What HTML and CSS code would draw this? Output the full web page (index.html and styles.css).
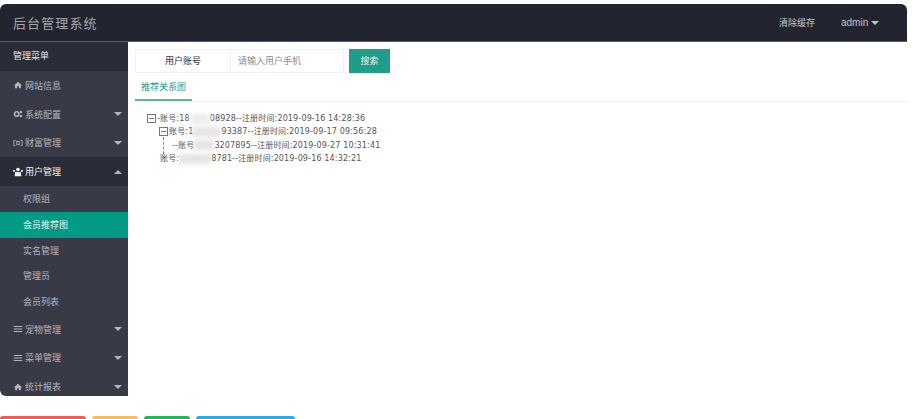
FILE: index.html
```html
<!DOCTYPE html>
<html lang="zh-CN">
<head>
    <meta charset="UTF-8">
    <title>后台管理系统</title>
    <link rel="stylesheet" href="styles.css">
</head>
<body>
    <div class="app">
        <div class="header">
            <div class="logo">后台管理系统</div>
            <div class="header-links">
                <span>清除缓存</span>
                <span class="user">admin <i class="caret"></i></span>
            </div>
        </div>
        <div class="main">
            <div class="sidebar">
                <div class="menu-title">管理菜单</div>
                <div class="menu-item">
                    <span><svg class="icon" viewBox="0 0 12 12"><path d="M6 2 1 6.5h1.5V10h2.500V7.500h2V10h2.500V6.500H11z"/></svg>网站信息</span>
                </div>
                <div class="menu-item">
                    <span><svg class="icon" viewBox="0 0 12 12"><circle cx="4.500" cy="6" r="2.600" fill="none" stroke="currentColor" stroke-width="1.800"/><circle cx="9.500" cy="3.500" r="1.500"/><circle cx="9.500" cy="8.500" r="1.500"/></svg>系统配置</span>
                    <i class="caret"></i>
                </div>
                <div class="menu-item">
                    <span><svg class="icon" viewBox="0 0 12 12"><path d="M3 3H1v6h2M9 3h2v6H9" fill="none" stroke="currentColor"/><rect x="4.500" y="4" width="3" height="4" fill="none" stroke="currentColor"/></svg>财富管理</span>
                    <i class="caret"></i>
                </div>
                <div class="menu-item open">
                    <span><svg class="icon" viewBox="0 0 12 12"><circle cx="6" cy="3" r="2.200"/><path d="M2.500 6h7l.5 5H2zM0 3.500h2.500L2 6H.5zM12 3.500H9.500L10 6h1.500z"/></svg>用户管理</span>
                    <i class="caret up"></i>
                </div>
                <div class="sub-item">权限组</div>
                <div class="sub-item active">会员推荐图</div>
                <div class="sub-item">实名管理</div>
                <div class="sub-item">管理员</div>
                <div class="sub-item">会员列表</div>
                <div class="menu-item">
                    <span><svg class="icon" viewBox="0 0 12 12"><path d="M1 2.500h10v1.200H1zM1 5.500h10v1.200H1zM1 8.500h10v1.200H1z"/></svg>宠物管理</span>
                    <i class="caret"></i>
                </div>
                <div class="menu-item">
                    <span><svg class="icon" viewBox="0 0 12 12"><path d="M1 2.500h10v1.200H1zM1 5.500h10v1.200H1zM1 8.500h10v1.200H1z"/></svg>菜单管理</span>
                    <i class="caret"></i>
                </div>
                <div class="menu-item">
                    <span><svg class="icon" viewBox="0 0 12 12"><path d="M6 2 1 6.500h1.500V10h2.500V7.500h2V10h2.500V6.500H11z"/></svg>统计报表</span>
                    <i class="caret"></i>
                </div>
            </div>
            <div class="content">
                <div class="search-bar">
                    <div class="search-label">用户账号</div>
                    <div class="search-input">请输入用户手机</div>
                    <div class="search-btn">搜索</div>
                </div>
                <div class="tabs">
                    <div class="tab">推荐关系图</div>
                </div>
                <div class="tree">
                    <div class="node"><i class="toggle"></i><span>-账号:18<b class="blur b1"></b>08928--注册时间:2019-09-16 14:28:36</span></div>
                    <div class="node level-1"><i class="toggle"></i><span>账号:1<b class="blur b2"></b>93387--注册时间:2019-09-17 09:56:28</span></div>
                    <div class="node level-2"><span>--账号<b class="blur b3"></b>3207895--注册时间:2019-09-27 10:31:41</span></div>
                    <div class="node level-1 leaf"><span>账号:<b class="blur b4"></b>8781--注册时间:2019-09-16 14:32:21</span></div>
                </div>
            </div>
        </div>
        <div class="actions">
            <div class="action red"></div>
            <div class="action orange"></div>
            <div class="action green"></div>
            <div class="action blue"></div>
        </div>
    </div>
</body>
</html>
```

FILE: styles.css
```css
html, body {
    margin: 0;
    padding: 0;
    height: 419px;
    overflow: hidden;
    background-color: #fff;
    font-family: "Noto Sans CJK SC", "Liberation Sans", sans-serif;
}

.app {
    width: 907px;
    padding-top: 4px;
}

.header {
    height: 38px;
    background-color: #22252f;
    border-radius: 6px 6px 0 0;
    box-sizing: border-box;
    border-bottom: 1px solid #555862;
    display: flex;
    align-items: center;
    justify-content: space-between;
    color: #c3c5c9;
}

.logo {
    margin-left: 13px;
    font-size: 13px;
    letter-spacing: 1.100px;
    color: #a5a7ac;
}

.header-links {
    display: flex;
    align-items: center;
    gap: 26px;
    margin-right: 28px;
    font-size: 9px;
}

.user {
    font-family: "Liberation Sans", sans-serif;
    font-size: 10px;
}

.caret {
    display: inline-block;
    width: 0;
    height: 0;
    border-left: 4px solid transparent;
    border-right: 4px solid transparent;
    border-top: 4px solid currentColor;
    vertical-align: middle;
}

.caret.up {
    border-top: 0;
    border-bottom: 4px solid currentColor;
}

.main {
    display: flex;
    align-items: flex-start;
}

.sidebar {
    width: 128px;
    height: 354px;
    overflow: hidden;
    background-color: #383b47;
    border-radius: 0 0 0 6px;
    color: #b4b6bb;
    font-size: 9px;
}

.menu-title {
    height: 29px;
    line-height: 28px;
    padding-left: 13px;
    background-color: #2a2d38;
    color: #e8e8ea;
}

.menu-item {
    height: 28.800px;
    padding: 0 6px 0 13px;
    display: flex;
    align-items: center;
    justify-content: space-between;
    box-sizing: border-box;
}

.menu-item span {
    display: flex;
    align-items: center;
}

.menu-item .caret {
    color: #b4b6bb;
}

.menu-item.open {
    background-color: #2a2d38;
    color: #f0f0f2;
}

.icon {
    width: 10px;
    height: 10px;
    margin-right: 2px;
    fill: currentColor;
}

.sub-item {
    height: 25.700px;
    line-height: 25px;
    padding-left: 23px;
}

.sub-item.active {
    background-color: #009a85;
    color: #e6f5f2;
}

.content {
    flex: 1;
    min-width: 0;
    padding-top: 7px;
}

.search-bar {
    display: flex;
    margin-left: 7px;
    height: 24px;
    font-size: 9px;
    line-height: 24px;
}

.search-label {
    width: 95px;
    text-align: center;
    color: #333;
    border: 1px solid #f2f2f2;
    border-right: 0;
    box-sizing: border-box;
    line-height: 22px;
}

.search-input {
    width: 114px;
    padding-left: 7px;
    box-sizing: border-box;
    color: #8c8c8c;
    border: 1px solid #f2f2f2;
    line-height: 22px;
}

.search-btn {
    width: 41px;
    margin-left: 5px;
    text-align: center;
    background-color: #1f9d8a;
    color: #e8f6f3;
}

.tabs {
    margin-top: 3px;
    height: 25px;
    margin-left: 7px;
    border-bottom: 1px solid #f0f0f0;
}

.tab {
    width: 57px;
    height: 25px;
    box-sizing: border-box;
    line-height: 22px;
    text-align: center;
    font-size: 9px;
    color: #1f9d8a;
    border-bottom: 2px solid #5fb98a;
}

.tree {
    position: relative;
    padding: 10px 0 0 19px;
    font-size: 8.500px;
    color: #555;
}

.tree::before {
    content: "";
    position: absolute;
    left: 35px;
    top: 35px;
    height: 22px;
    border-left: 1px dashed #888;
}

.node {
    height: 13.300px;
    line-height: 13px;
    display: flex;
    align-items: center;
    white-space: nowrap;
}

.node span {
    font-family: "DejaVu Sans", "Noto Sans CJK SC", sans-serif;
    font-size: 8px;
    letter-spacing: 0.150px;
}

.level-1 {
    padding-left: 12px;
}

.level-2 {
    padding-left: 25px;
}

.leaf {
    padding-left: 13px;
}

.leaf span {
    padding-left: 0;
}

.toggle {
    position: relative;
    width: 7px;
    height: 7px;
    border: 1px solid #777;
    margin-right: 1px;
}

.toggle::after {
    content: "";
    position: absolute;
    left: 1px;
    right: 1px;
    top: 3px;
    border-top: 1px solid #777;
}

.blur {
    display: inline-block;
    height: 10px;
    vertical-align: middle;
    background-color: #e4e4e4;
    filter: blur(2px);
}

.b1 {
    width: 20px;
    background-color: #eee;
}

.b2 {
    width: 28px;
}

.b3 {
    width: 20px;
}

.b4 {
    width: 32px;
}

.actions {
    display: flex;
    gap: 6px;
    margin-top: 20px;
}

.action {
    height: 12px;
    border-radius: 3px;
}

.red {
    width: 86px;
    background-color: #f05a5f;
}

.orange {
    width: 46px;
    background-color: #f5bb5d;
}

.green {
    width: 46px;
    background-color: #1fb85f;
}

.blue {
    width: 99px;
    background-color: #2cabe3;
}
```
